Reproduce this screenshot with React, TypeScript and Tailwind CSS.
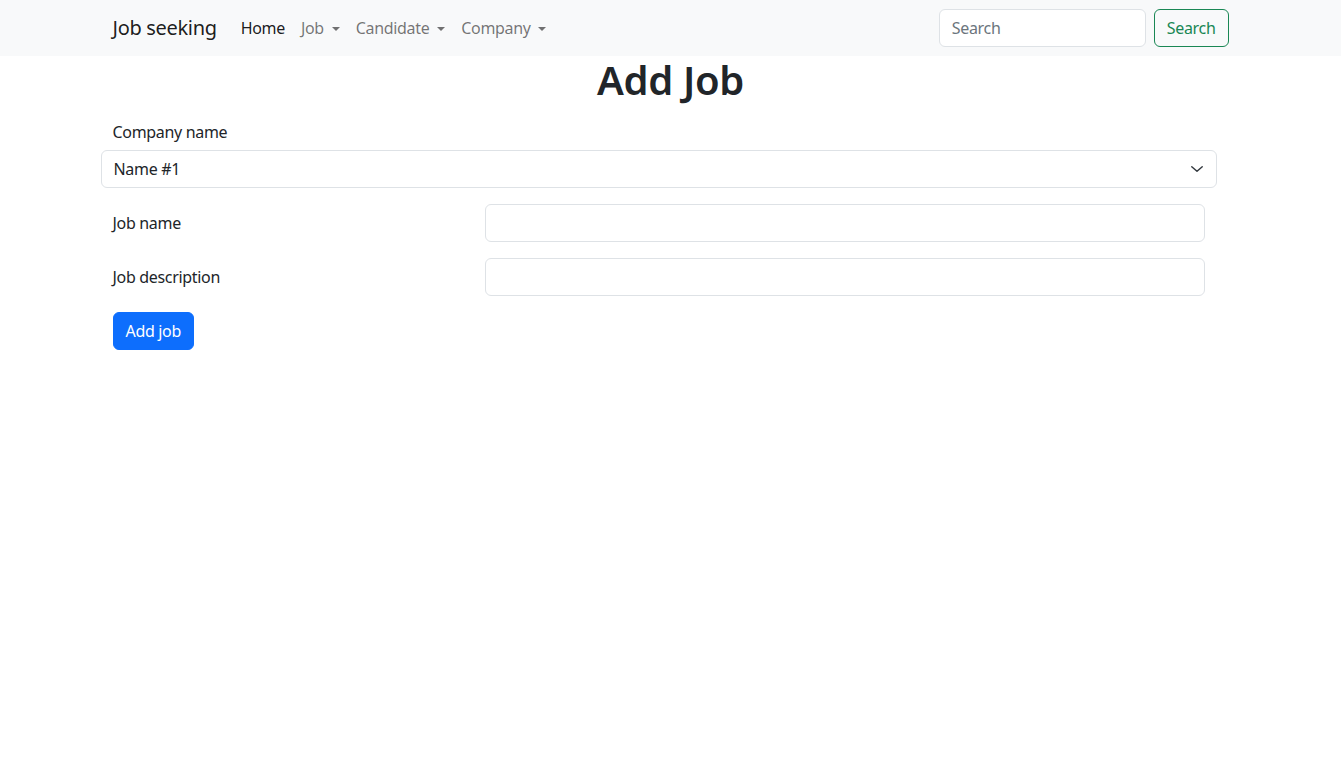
const font = { fontFamily: '"Noto Sans", "Open Sans", sans-serif' };

function Caret() {
  return (
    <span className="ml-[4px] inline-block h-0 w-0 border-x-[4.8px] border-t-[4.8px] border-x-transparent border-t-current align-[3px]" />
  );
}

function SelectChevron() {
  return (
    <svg
      viewBox="0 0 16 16"
      className="pointer-events-none absolute right-[13px] top-[13px] h-[12px] w-[14px]"
      preserveAspectRatio="none"
      fill="none"
      stroke="#343a40"
      strokeWidth="1.6"
      strokeLinecap="round"
      strokeLinejoin="round"
    >
      <path d="m2 5 6 6 6-6" />
    </svg>
  );
}

function Navbar() {
  return (
    <nav className="h-14 bg-[#f8f9fa]">
      <div className="mx-auto flex h-full w-[1140px] items-center justify-between px-3">
        <div className="flex items-center">
          <a className="mr-4 py-[5px] text-xl text-black/90">Job seeking</a>
          <ul className="flex items-center text-base">
            <li className="px-2 py-2 text-black/90">Home</li>
            <li className="px-2 py-2 text-black/55">
              Job <Caret />
            </li>
            <li className="px-2 py-2 text-black/55">
              Candidate <Caret />
            </li>
            <li className="px-2 py-2 text-black/55">
              Company <Caret />
            </li>
          </ul>
        </div>
        <form className="flex items-center">
          <input
            type="search"
            placeholder="Search"
            className="mr-2 h-[38px] w-[207px] rounded-md border border-[#dee2e6] bg-white px-3 text-base text-[#212529] outline-none placeholder:text-[#6c757d]"
          />
          <button
            type="button"
            className="h-[38px] rounded-md border border-[#198754] px-3 text-base text-[#198754]"
          >
            Search
          </button>
        </form>
      </div>
    </nav>
  );
}

export default function App() {
  return (
    <div className="min-h-screen bg-white tracking-[-0.02em] text-[#212529]" style={font}>
      <Navbar />
      <div className="mx-auto w-[1140px]">
        <h1 className="mb-2 text-center text-[40px] font-semibold leading-[1.2]">Add Job</h1>
        <form className="w-[1116px]">
          <label className="mb-1.5 block px-3 pt-2 text-base leading-6">Company name</label>
          <div className="relative">
            <select className="h-[38px] w-full appearance-none rounded-md border border-[#dee2e6] bg-white pl-3 pr-9 text-base text-[#212529] outline-none">
              <option>Name #1</option>
              <option>Name #2</option>
            </select>
            <SelectChevron />
          </div>

          <div className="mt-4 grid grid-cols-3">
            <label className="px-3 py-[7px] text-base leading-6">Job name</label>
            <div className="col-span-2 px-3">
              <input className="h-[38px] w-full rounded-md border border-[#dee2e6] px-3 text-base outline-none" />
            </div>
          </div>

          <div className="mt-4 grid grid-cols-3">
            <label className="px-3 py-[7px] text-base leading-6">Job description</label>
            <div className="col-span-2 px-3">
              <input className="h-[38px] w-full rounded-md border border-[#dee2e6] px-3 text-base outline-none" />
            </div>
          </div>

          <div className="mt-4 px-3">
            <button
              type="button"
              className="h-[38px] rounded-md border border-[#0d6efd] bg-[#0d6efd] px-3 text-base text-white"
            >
              Add job
            </button>
          </div>
        </form>
      </div>
    </div>
  );
}
